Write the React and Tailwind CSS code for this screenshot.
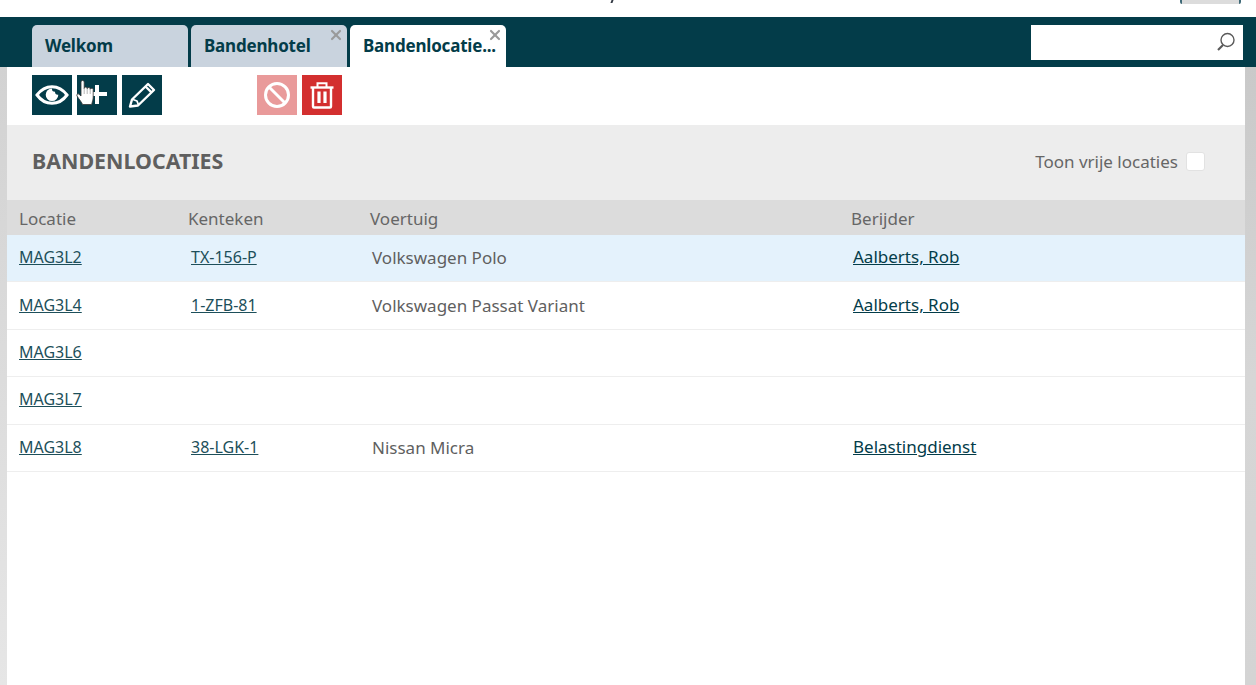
import React from 'react';
import { X } from 'lucide-react';

const rows = [
  { loc: 'MAG3L2', plate: 'TX-156-P', car: 'Volkswagen Polo', driver: 'Aalberts, Rob', active: true },
  { loc: 'MAG3L4', plate: '1-ZFB-81', car: 'Volkswagen Passat Variant', driver: 'Aalberts, Rob' },
  { loc: 'MAG3L6' },
  { loc: 'MAG3L7' },
  { loc: 'MAG3L8', plate: '38-LGK-1', car: 'Nissan Micra', driver: 'Belastingdienst' },
];

const Tab = ({ label, active, closable }) => (
  <div className={`relative w-[156px] h-[42px] rounded-t-[5px] pl-[13px] pt-[9px] text-[17px] leading-[24px] font-bold tracking-[-0.2px] text-[#033c49] ${active ? 'bg-white' : 'bg-[#c9d3de]'}`}>
    {label}
    {closable && (
      <X size={16} strokeWidth={3.2} className="absolute right-[3px] top-[2px] text-[#9a9a9a]" />
    )}
  </div>
);

const ToolButton = ({ className, children }) => (
  <div className={`relative w-10 h-10 flex items-center justify-center ${className}`}>{children}</div>
);

const EyeIcon = () => (
  <svg width="34" height="20" viewBox="0 0 34 20" fill="none">
    <path d="M2 10C6 4.500 10.500 1.700 17 1.700S28 4.500 32 10C28 15.500 23.500 18.300 17 18.300S6 15.500 2 10Z" stroke="white" strokeWidth="3" />
    <path d="M17 3.500a6.300 6.300 0 1 0 6.300 6.300 3 3 0 0 1-3.300-3A3 3 0 0 1 17 3.500Z" fill="white" />
  </svg>
);

const PencilIcon = () => (
  <svg width="28" height="26" viewBox="0 0 28 26" fill="none" stroke="white" strokeWidth="2.400" strokeLinejoin="round">
    <path d="M2 24.500L4 17.500L20 2L26 8L10 23.500Z" />
    <path d="M17.500 4.500L23.500 10.300" />
    <path d="M5 17.500L9 19L10.500 23" strokeWidth="1.800" />
  </svg>
);

const BanIcon = () => (
  <svg width="28" height="28" viewBox="0 0 28 28" fill="none" stroke="white" strokeWidth="3">
    <circle cx="14" cy="14" r="11.500" />
    <path d="M6 6L22 22" />
  </svg>
);

const TrashIcon = () => (
  <svg width="26" height="28" viewBox="0 0 26 28" fill="none" stroke="white" strokeWidth="2.400">
    <path d="M1.500 6.500H24.500" />
    <path d="M8.500 6V2.200H17.500V6" strokeWidth="2" />
    <path d="M4 6.500V25.500a1 1 0 0 0 1 1H21a1 1 0 0 0 1-1V6.500" />
    <path d="M10 10.500V22M16 10.500V22" strokeWidth="3.200" />
  </svg>
);

const HandCursor = () => (
  <svg width="19" height="26" viewBox="0 0 19 26" className="absolute left-[69px] top-[13px]">
    <path d="M5 2a1.600 1.600 0 0 1 3.200 0V8.500a1.500 1.500 0 0 1 3 .2a1.500 1.500 0 0 1 3 .6a1.500 1.500 0 0 1 3 1V17c0 3-1 4.500-1.500 7.500H6.500C6 22.500 3.500 20 1 16c-.8-1.500.8-2.800 2-1.800L5 16Z" fill="white" stroke="#333333" strokeWidth="0.800" />
    <path d="M8.200 8V14M11.200 9V14M14.200 9.500V14" stroke="#999999" strokeWidth="0.700" />
  </svg>
);

const SearchIcon = () => (
  <svg width="20" height="20" viewBox="0 0 20 20" fill="none" className="absolute right-[7px] top-[7px]">
    <circle cx="11.500" cy="8" r="6.500" stroke="#5a5a5a" strokeWidth="1.400" />
    <path d="M7 13L2 18" stroke="#5a5a5a" strokeWidth="2.200" />
  </svg>
);

export default function App() {
  return (
    <div className="w-[1256px] h-[685px] flex flex-col overflow-hidden bg-white font-['Noto_Sans',sans-serif]">
      {/* Top strip */}
      <div className="relative h-[17px] shrink-0 bg-white">
        <div className="absolute left-[611px] top-0 w-[2px] h-[3px] -skew-x-[20deg] bg-[#333a44]" />
        <div className="absolute left-[1180px] top-0 w-[61px] h-[4px] rounded-b-[2px] bg-[#dcdcdc] border-x-2 border-[#3f6a78]" />
      </div>

      {/* Tabs */}
      <div className="h-[50px] shrink-0 bg-[#033c49] flex items-start justify-between pt-2 pl-8 pr-[13px]">
        <div className="flex gap-[3px]">
          <Tab label="Welkom" />
          <Tab label="Bandenhotel" closable />
          <Tab label="Bandenlocatie..." active closable />
        </div>
        <div className="relative w-[212px] h-[35px] bg-white">
          <SearchIcon />
        </div>
      </div>

      <div className="flex-1 flex min-h-0">
        <div className="w-[7px] bg-linear-to-b from-[#d2d2d2] to-[#e6e6e6]" />

        <div className="flex-1 bg-white">
          {/* Toolbar */}
          <div className="relative h-[58px] pt-2 pl-[25px] flex">
            <div className="flex gap-[5px]">
              <ToolButton className="bg-[#033c49]"><EyeIcon /></ToolButton>
              <ToolButton className="bg-[#033c49]">
                <div className="absolute left-[8px] top-[17px] w-[22px] h-[3.500px] bg-white" />
                <div className="absolute left-[18px] top-[10px] w-[3.500px] h-[19px] bg-white" />
              </ToolButton>
              <ToolButton className="bg-[#033c49]"><PencilIcon /></ToolButton>
            </div>
            <div className="flex gap-[5px] ml-[95px]">
              <ToolButton className="bg-[#e99a9a]"><BanIcon /></ToolButton>
              <ToolButton className="bg-[#d32f2f]"><TrashIcon /></ToolButton>
            </div>
            <HandCursor />
          </div>

          {/* Heading */}
          <div className="h-[75px] bg-[#ededed] flex items-center justify-between pl-[25px] pr-10">
            <h1 className="text-[21.400px] font-bold text-[#5f5f5f] mb-[3px]">BANDENLOCATIES</h1>
            <label className="flex items-center gap-2 text-[17px] text-[#666666] mb-[2px]">
              Toon vrije locaties
              <span className="w-[19px] h-[19px] rounded-[3px] bg-white border border-[#e2e2e2]" />
            </label>
          </div>

          {/* Table header */}
          <div className="h-[35px] pt-[2px] bg-[#dcdcdc] grid grid-cols-[169px_182px_481px_1fr] items-center text-[17px] text-[#666666]">
            <div className="pl-3">Locatie</div>
            <div className="pl-3">Kenteken</div>
            <div className="pl-3">Voertuig</div>
            <div className="pl-3">Berijder</div>
          </div>

          {/* Rows */}
          {rows.map((row) => (
            <div key={row.loc} className={`h-[47.400px] border-b border-[#eeeeee] grid grid-cols-[169px_182px_481px_1fr] items-center ${row.active ? 'bg-[#e4f2fc]' : ''}`}>
              <div className="pl-3 pb-[2px]"><a className="text-[16px] text-[#1d4f5a] underline">{row.loc}</a></div>
              <div className="pl-[15px] pb-[2px]"><a className="text-[16px] text-[#1d4f5a] underline">{row.plate}</a></div>
              <div className="pl-[14px] text-[17px] text-[#5f5f5f]">{row.car}</div>
              <div className="pl-[14px] pb-[2px]"><a className="text-[17px] text-[#033c49] underline">{row.driver}</a></div>
            </div>
          ))}
        </div>

        <div className="w-[11px] bg-linear-to-b from-[#c9c9c9] via-[#d6d6d6] to-[#d4d4d4]" />
      </div>
    </div>
  );
}
